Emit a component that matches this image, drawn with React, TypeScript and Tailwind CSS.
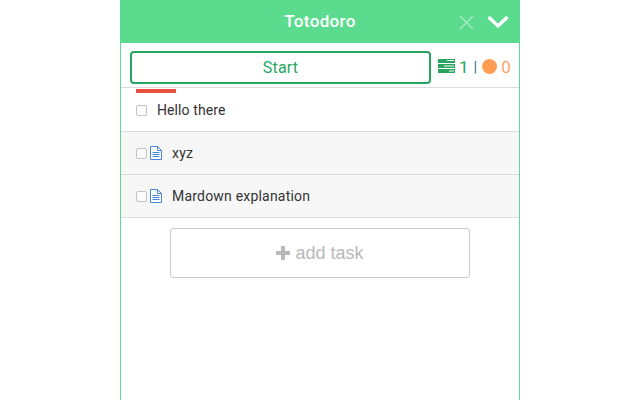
import React from "react";

function DocIcon() {
  return (
    <svg width="12" height="14" viewBox="0 0 12 14" className="shrink-0" fill="none">
      <path d="M.5 .5H7.5L11.5 4.5V13.5H.5Z" stroke="#4a86d8" strokeWidth="1" fill="#fff" />
      <path d="M7.5 .5V4.5H11.5" stroke="#4a86d8" strokeWidth="1" />
      <path d="M2.5 6.5H9.5M2.5 8.5H9.5M2.5 10.5H9.5" stroke="#4a86d8" strokeWidth="1" />
    </svg>
  );
}

function Check() {
  return <span className="block w-[11px] h-[11px] shrink-0 rounded-[2px] border border-[#c4c4c4] bg-white/40" />;
}

export default function App() {
  return (
    <div className="h-[400px] w-[640px] bg-white flex justify-center" style={{ fontFamily: "Roboto, sans-serif" }}>
      <div className="w-[400px] h-full border-x border-[#5adb8e] flex flex-col relative">
        <header className="-mx-px h-[43px] bg-[#5adb8e] flex items-center justify-center relative shrink-0">
          <span className="text-white font-medium text-[17px] tracking-[0.35px]">Totodoro</span>
          <div className="absolute left-[339px] top-[15px] flex items-center gap-[13px]">
            <svg width="15" height="15" viewBox="0 0 15 15" fill="none" stroke="#a8eac2" strokeWidth="1.4">
              <path d="M1 1L14 14M14 1L1 14" />
            </svg>
            <svg width="22" height="14" viewBox="0 0 22 14" fill="none" stroke="#fff" strokeWidth="3.4" className="-mt-[1px]">
              <path d="M1.5 2L11 11L20.5 2" />
            </svg>
          </div>
        </header>

        <div className="h-[45px] shrink-0 flex items-center pl-[9px] pt-[5px] border-b border-[#dcdcdc]">
          <button className="w-[301px] h-[33px] border-2 border-[#27a55f] rounded-[4px] text-[#27a863] text-[16px] tracking-[0.2px] flex items-center justify-center">
            Start
          </button>
          <div className="flex items-center ml-[7px] -mt-[3px] text-[17px]">
            <svg width="17" height="14" viewBox="0 0 17 14" className="shrink-0">
              <rect x="0" y="0" width="17" height="4" fill="#27a55f" />
              <rect x="0" y="5" width="17" height="4" fill="#27a55f" />
              <rect x="0" y="10" width="17" height="4" fill="#27a55f" />
              <rect x="9" y="1" width="7" height="1" fill="#fff" />
              <rect x="6" y="6.5" width="10" height="1" fill="#fff" />
              <rect x="11" y="11.5" width="5" height="1" fill="#fff" />
            </svg>
            <span className="ml-[4px] mt-[3px] text-[#27a55f]">1</span>
            <span className="ml-[5px] mt-[3px] text-[#2f6f8f] text-[15px]">|</span>
            <span className="ml-[5px] block w-[15px] h-[15px] rounded-full bg-[#ff9d55]" />
            <span className="ml-[4px] mt-[3px] text-[#ffa56a]">0</span>
          </div>
        </div>

        <div className="absolute left-[15px] top-[89px] w-[40px] h-[4px] bg-[#e8503f]" />

        <div className="h-[44px] shrink-0 flex items-center pl-[15px] pt-[2px] border-b border-[#dcdcdc] text-[14px] tracking-[0.1px] text-[#333]">
          <Check />
          <span className="ml-[10px]">Hello there</span>
        </div>
        <div className="h-[43px] shrink-0 flex items-center pl-[15px] border-b border-[#dcdcdc] bg-[#f7f7f7] text-[14px] tracking-[0.2px] text-[#333]">
          <Check />
          <span className="ml-[3px] flex"><DocIcon /></span>
          <span className="ml-[10px]">xyz</span>
        </div>
        <div className="h-[43px] shrink-0 flex items-center pl-[15px] border-b border-[#dcdcdc] bg-[#f7f7f7] text-[14px] tracking-[0.2px] text-[#333]">
          <Check />
          <span className="ml-[3px] flex"><DocIcon /></span>
          <span className="ml-[10px]">Mardown explanation</span>
        </div>

        <div className="flex justify-center pt-[10px]">
          <button
            className="w-[300px] h-[50px] border border-[#cccccc] rounded-[3px] flex items-center justify-center text-[#b9b9b9] text-[18px]"
            style={{ fontFamily: '"Liberation Sans", sans-serif' }}
          >
            <svg width="14" height="14" viewBox="0 0 14 14" className="mr-[5px]">
              <path d="M5 0H9V5H14V9H9V14H5V9H0V5H5Z" fill="#b9b9b9" />
            </svg>
            add task
          </button>
        </div>
      </div>
    </div>
  );
}
